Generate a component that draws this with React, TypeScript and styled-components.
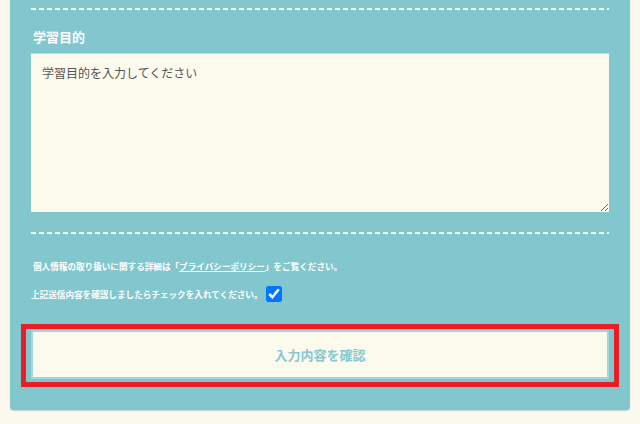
import React from "react";
import styled, { createGlobalStyle } from "styled-components";

const Global = createGlobalStyle`
  html, body { margin: 0; padding: 0; }
  body {
    background: #fbf8ee;
    font-family: "Noto Sans CJK JP", "Noto Sans", sans-serif;
  }
`;

const Page = styled.div`
  padding: 0 10px 14px;
  width: 640px;
  box-sizing: border-box;
`;

const Panel = styled.section`
  background: #82c7ce;
  border-radius: 0 0 4px 4px;
  box-shadow: 0 1px 1px rgba(90, 150, 160, 0.35);
  padding: 8px 21px 23px;
  display: flex;
  flex-direction: column;
`;

const Dashed = styled.div<{ $mt?: number }>`
  height: 2px;
  margin-top: ${(p) => p.$mt ?? 0}px;
  background-image: repeating-linear-gradient(
    to right,
    #ffffff 0 5px,
    transparent 5px 8px
  );
  opacity: 0.95;
`;

const Label = styled.label`
  display: block;
  margin: 18px 0 0 2px;
  color: #ffffff;
  font-size: 13px;
  font-weight: 700;
  line-height: 18px;
`;

const TextArea = styled.textarea`
  display: block;
  margin-top: 7px;
  width: 100%;
  height: 159px;
  box-sizing: border-box;
  border: none;
  border-top: 1px solid #b6e0e4;
  background: #fcf9ed;
  padding: 10px 11px;
  font-family: "Noto Sans CJK JP", sans-serif;
  font-size: 12px;
  line-height: 18px;
  color: #555;
  resize: vertical;
  outline: none;
  &::placeholder {
    color: #555555;
  }
`;

const Note = styled.p<{ $mt: number; $ml?: number }>`
  margin: ${(p) => p.$mt}px 0 0 ${(p) => p.$ml ?? 0}px;
  color: #ffffff;
  font-size: 8.6px;
  font-weight: 700;
  line-height: 16px;
  display: flex;
  align-items: center;
  gap: 3px;
  white-space: nowrap;
`;

const Link = styled.a`
  color: #ffffff;
  text-decoration: underline;
`;

const Check = styled.input`
  width: 16px;
  height: 16px;
  margin: 0;
  accent-color: #0075ff;
`;

const RedFrame = styled.div`
  margin: 22px -10px 0;
  border: 5px solid #e81d25;
  padding: 1px 5px 3px;
`;

const SubmitButton = styled.button`
  display: block;
  width: 100%;
  height: 49px;
  box-sizing: border-box;
  border: 2px solid #a3d6db;
  background: #fcf9ed;
  color: #86c8cf;
  font-family: "Noto Sans CJK JP", sans-serif;
  font-size: 13px;
  font-weight: 700;
  cursor: pointer;
`;

export default function App() {
  return (
    <>
      <Global />
      <Page>
        <Panel>
          <Dashed />
          <Label htmlFor="purpose">学習目的</Label>
          <TextArea id="purpose" placeholder="学習目的を入力してください" />
          <Dashed $mt={20} />
          <Note $mt={24} $ml={2}>
            <span>
              個人情報の取り扱いに関する詳細は「<Link href="#">プライバシーポリシー</Link>」をご覧ください。
            </span>
          </Note>
          <Note $mt={12}>
            <span>上記送信内容を確認しましたらチェックを入れてください。</span>
            <Check type="checkbox" defaultChecked />
          </Note>
          <RedFrame>
            <SubmitButton type="button">入力内容を確認</SubmitButton>
          </RedFrame>
        </Panel>
      </Page>
    </>
  );
}
